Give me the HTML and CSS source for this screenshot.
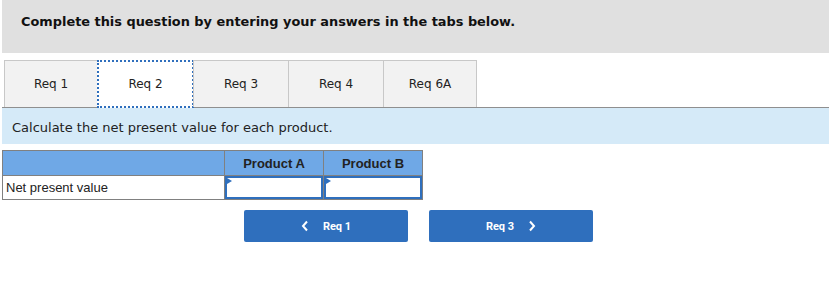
FILE: index.html
```html
<!DOCTYPE html>
<html lang="en">
<head>
    <meta charset="UTF-8">
    <title>Req 2</title>
    <link rel="stylesheet" href="styles.css">
</head>
<body>

<div class="question-bar">
    <p>Complete this question by entering your answers in the tabs below.</p>
</div>

<!-- Tabs -->
<div class="tabs">
    <div class="tab">Req 1</div>
    <div class="tab active">Req 2</div>
    <div class="tab">Req 3</div>
    <div class="tab">Req 4</div>
    <div class="tab">Req 6A</div>
</div>

<div class="instructions">Calculate the net present value for each product.</div>

<table class="answer-table">
    <tr>
        <th class="label-col"></th>
        <th>Product A</th>
        <th>Product B</th>
    </tr>
    <tr>
        <td>Net present value</td>
        <td class="input-cell"><input type="text"></td>
        <td class="input-cell"><input type="text"></td>
    </tr>
</table>

<div class="nav-buttons">
    <button class="nav-btn">
        <svg width="8" height="12" viewBox="0 0 8 12"><path d="M6 1.5 L2 6 L6 10.5" fill="none" stroke="#fff" stroke-width="2"/></svg>
        <span>Req 1</span>
    </button>
    <button class="nav-btn">
        <span>Req 3</span>
        <svg width="8" height="12" viewBox="0 0 8 12"><path d="M2 1.5 L6 6 L2 10.5" fill="none" stroke="#fff" stroke-width="2"/></svg>
    </button>
</div>

</body>
</html>
```

FILE: styles.css
```css
* {
    margin: 0;
    padding: 0;
    box-sizing: border-box;
}
body {
    font-family: 'DejaVu Sans', Verdana, sans-serif;
    background: #fff;
    color: #222;
    padding: 0 0 0 2px;
}

/* Top question bar */
.question-bar {
    background-color: #e0e0e0;
    height: 53px;
    padding: 14px 0 0 19px;
}
.question-bar p {
    font-weight: bold;
    font-size: 12.9px;
    color: #111;
}

/* Tabs */
.tabs {
    display: flex;
    margin-top: 7px;
    padding-left: 2px;
    border-bottom: 1px solid #8f8f8f;
    height: 48px;
}
.tab {
    width: 96px;
    height: 47px;
    background-color: #f2f2f2;
    border: 1px solid #c8c8c8;
    border-bottom: none;
    margin-right: -1px;
    display: flex;
    align-items: center;
    justify-content: center;
    font-size: 12px;
    color: #222;
}
.tab:first-child,
.tab:last-child {
    width: 94px;
}
.tab.active {
    width: 97px;
    background-color: #fff;
    border: 2px dotted #2f6fbd;
    height: 48px;
    margin-bottom: -1px;
}

/* Instructions band */
.instructions {
    background-color: #d5eaf8;
    height: 36px;
    padding: 12px 0 0 10px;
    font-size: 13px;
    color: #222;
}

/* Answer table */
.answer-table {
    margin-top: 6px;
    border-collapse: collapse;
    font-family: 'Liberation Sans', Arial, sans-serif;
}
.answer-table th {
    background-color: #6fa8e6;
    border: 1px solid #808080;
    height: 25px;
    width: 99px;
    font-size: 13px;
    color: #222;
}
.answer-table th.label-col {
    width: 222px;
}
.answer-table td {
    border: 1px solid #808080;
    height: 24px;
    font-size: 13px;
    padding: 0 3px;
    color: #222;
}
.answer-table td.input-cell {
    padding: 0;
    position: relative;
}
.input-cell input {
    display: block;
    width: 100%;
    height: 23px;
    border: 2px solid #2f6fbd;
    outline: none;
    background: #fff;
}
.input-cell::before {
    content: "";
    position: absolute;
    left: 2px;
    top: 2px;
    border-left: 5px solid #2f6fbd;
    border-top: 3px solid transparent;
    border-bottom: 3px solid transparent;
}

/* Navigation buttons */
.nav-buttons {
    display: flex;
    gap: 21px;
    margin: 10px 0 0 242px;
}
.nav-btn {
    width: 164px;
    height: 32px;
    background-color: #2f6fbd;
    border: none;
    border-radius: 2px;
    color: #fff;
    font-family: 'Roboto', Arial, sans-serif;
    font-weight: bold;
    font-size: 11px;
    display: flex;
    align-items: center;
    justify-content: center;
    gap: 14px;
}
```
